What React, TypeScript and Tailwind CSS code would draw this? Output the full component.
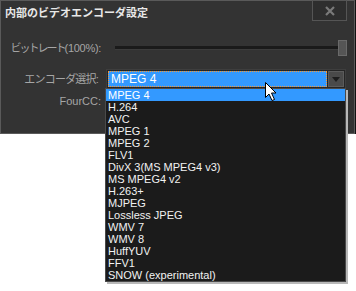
const codecs = [
  'MPEG 4',
  'H.264',
  'AVC',
  'MPEG 1',
  'MPEG 2',
  'FLV1',
  'DivX 3(MS MPEG4 v3)',
  'MS MPEG4 v2',
  'H.263+',
  'MJPEG',
  'Lossless JPEG',
  'WMV 7',
  'WMV 8',
  'HuffYUV',
  'FFV1',
  'SNOW (experimental)',
];

const jp = "font-['Liberation_Sans','Noto_Sans_CJK_JP',sans-serif]";

const Cursor = () => (
  <svg width="13" height="21" viewBox="0 0 13 21" className="absolute left-[264px] top-[81px]">
    <path
      d="M1.5 1.5 L1.5 16.5 L5 13 L8 19.5 L10.5 18.5 L7.5 12 L12 12 Z"
      fill="#fff"
      stroke="#000"
      strokeWidth="1"
      strokeLinejoin="miter"
    />
  </svg>
);

const App = () => {
  return (
    <div className={`relative w-[356px] h-[291px] bg-white overflow-hidden ${jp}`}>
      <section className="w-[355px] h-[134px] bg-[#333333] border border-[#5a5a5a] shadow-[1px_0_0_#111]">
        <div className="flex items-start justify-between h-[21px]">
          <h1 className="pl-[4px] pt-[3px] text-[11px] leading-[16px] font-bold text-[#e8e8e8] font-['Noto_Sans_CJK_JP',sans-serif]">
            内部のビデオエンコーダ設定
          </h1>
          <button className="mr-[7px] -mt-px w-[35px] h-[21px] border border-[#555] bg-[#2e2e2e] flex items-center justify-center">
            <svg width="10" height="10" viewBox="0 0 10 10">
              <path d="M1 1 L9 9 M9 1 L1 9" stroke="#7a7a7a" strokeWidth="2.2" />
            </svg>
          </button>
        </div>

        <div className="grid grid-cols-[100px_1fr] text-[11px] text-[#a6a6a6]">
          <div className="mt-[18px] h-[16px] flex items-center justify-end">
            <span className="tracking-[-2px]">ビットレート</span>
            <span className="tracking-[-0.3px]">(100%):</span>
          </div>
          <div className="mt-[18px] h-[16px] flex items-center pl-[14px] pr-[7px]">
            <div className="flex-1 h-[4px] bg-[#1a1a1a] border-b border-[#3c3c3c]" />
            <div className="w-[9px] h-[16px] bg-[#555] border border-[#6a6a6a]" />
          </div>

          <div className="mt-[13px] h-[20px] flex items-center justify-end pr-[3px] tracking-[-0.8px]">
            エンコーダ選択:
          </div>
          <div className="mt-[13px] ml-[5px] mr-[8px] h-[20px] flex items-center gap-[1px] bg-[#262626] border border-[#3e3e3e] p-px">
            <div className="flex-1 h-[16px] bg-[#3399ff] outline-1 outline-dotted outline-[#ff9a2e] -outline-offset-1 pl-[3px] text-[12px] leading-[16px] text-white">
              MPEG 4
            </div>
            <div className="w-[16px] h-[16px] bg-[#4a4a4a] border border-[#5c5c5c] flex items-center justify-center">
              <svg width="8" height="5" viewBox="0 0 8 5">
                <path d="M0 0 L8 0 L4 5 Z" fill="#1e1e1e" />
              </svg>
            </div>
          </div>

          <div className="mt-[5px] h-[14px] flex items-center justify-end">FourCC:</div>
          <div />
        </div>
      </section>

      <ul className="absolute left-[105px] top-[88px] w-[241px] bg-[#1b1b1b] border border-[#4a4a4a] shadow-[2px_2px_0_#b8b8b8] text-[11px] text-[#f2f2f2]">
        {codecs.map((c, i) => (
          <li
            key={c}
            className={`h-[12px] leading-[12px] pl-[2px] whitespace-pre ${i === 0 ? 'bg-[#3399ff] text-white' : ''}`}
          >
            {c}
          </li>
        ))}
      </ul>

      <Cursor />
    </div>
  );
};

export default App;
